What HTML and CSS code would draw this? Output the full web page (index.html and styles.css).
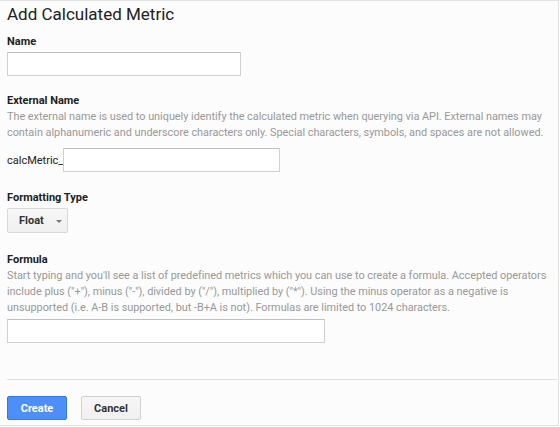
FILE: index.html
```html
<!DOCTYPE html>
<html>
<head>
<meta charset="utf-8">
<link rel="stylesheet" href="styles.css">
</head>
<body>
<div class="panel">
  <h1 class="title">Add Calculated Metric</h1>
  <div class="field field-name">
    <div class="label">Name</div>
    <div class="input input-name"></div>
  </div>
  <div class="field field-ext">
    <div class="label">External Name</div>
    <p class="help">The external name is used to uniquely identify the calculated metric when querying via API. External names may contain alphanumeric and underscore characters only. Special characters, symbols, and spaces are not allowed.</p>
    <div class="prefix-row">
      <span class="prefix">calcMetric_</span>
      <div class="input input-ext"></div>
    </div>
  </div>
  <div class="field field-type">
    <div class="label">Formatting Type</div>
    <div class="dropdown"><span>Float</span><span class="caret"></span></div>
  </div>
  <div class="field field-formula">
    <div class="label">Formula</div>
    <p class="help">Start typing and you'll see a list of predefined metrics which you can use to create a formula. Accepted operators include plus ("+"), minus ("-"), divided by ("/"), multiplied by ("*"). Using the minus operator as a negative is unsupported (i.e. A-B is supported, but -B+A is not). Formulas are limited to 1024 characters.</p>
    <div class="input input-formula"></div>
  </div>
  <div class="divider"></div>
  <div class="actions">
    <div class="btn btn-primary">Create</div>
    <div class="btn btn-default">Cancel</div>
  </div>
</div>
</body>
</html>
```
FILE: styles.css
```css
html, body {
  margin: 0;
  padding: 0;
  background: #ffffff;
}
body {
  font-family: Roboto, "Liberation Sans", Arial, sans-serif;
  color: #222;
}
.panel {
  box-sizing: border-box;
  width: 559px;
  height: 426px;
  background: #fcfcfc;
  border-top: 1px solid #e2e2e2;
  border-right: 1px solid #e2e2e2;
  border-bottom: 1px solid #e2e2e2;
  padding: 0 0 0 7px;
}
.title {
  margin: 0;
  font-size: 17px;
  font-weight: 400;
  line-height: 24px;
  padding-top: 1px;
  color: #222;
}
.label {
  font-size: 11px;
  font-weight: 700;
  line-height: 14px;
  color: #222;
}
.field-name { margin-top: 9px; }
.field-name .label { margin-bottom: 3px; }
.input {
  box-sizing: border-box;
  height: 24px;
  background: #fff;
  border: 1px solid #d0d0d0;
  border-top-color: #c0c0c0;
}
.input-name { width: 234px; }
.field-ext { margin-top: 18px; }
.help {
  margin: 1px 0 0;
  font-size: 10.9px;
  line-height: 16px;
  color: #999;
  letter-spacing: -0.03px;
}
.prefix-row {
  display: flex;
  align-items: center;
  margin-top: 7px;
}
.prefix {
  font-size: 11px;
  color: #222;
  width: 56px;
}
.input-ext { width: 217px; }
.field-type { margin-top: 19px; }
.field-type .label { margin-bottom: 3px; }
.dropdown {
  box-sizing: border-box;
  width: 61px;
  height: 25px;
  border: 1px solid #d8d8d8;
  border-radius: 2px;
  background: linear-gradient(#f6f6f6, #f0f0f0);
  display: flex;
  align-items: center;
  padding-left: 11px;
  font-size: 11px;
  font-weight: 700;
  color: #333;
}
.caret {
  width: 0;
  height: 0;
  border-left: 3px solid transparent;
  border-right: 3px solid transparent;
  border-top: 3px solid #777;
  margin-left: 12px;
  margin-top: 1px;
}
.field-formula { margin-top: 20px; }
.field-formula .input { margin-top: 3px; }
.input-formula { width: 318px; }
.divider {
  height: 1px;
  background: #e0e0e0;
  margin: 36px 1px 0 0;
}
.actions {
  display: flex;
  gap: 14px;
  margin-top: 16px;
}
.btn {
  box-sizing: border-box;
  width: 60px;
  height: 24px;
  border-radius: 2px;
  font-size: 11px;
  font-weight: 700;
  display: flex;
  align-items: center;
  justify-content: center;
}
.btn-primary {
  background: #4d8ff7;
  border: 1px solid #3079ed;
  color: #fff;
}
.btn-default {
  background: linear-gradient(#f6f6f6, #f0f0f0);
  border: 1px solid #d0d0d0;
  color: #333;
}
```
